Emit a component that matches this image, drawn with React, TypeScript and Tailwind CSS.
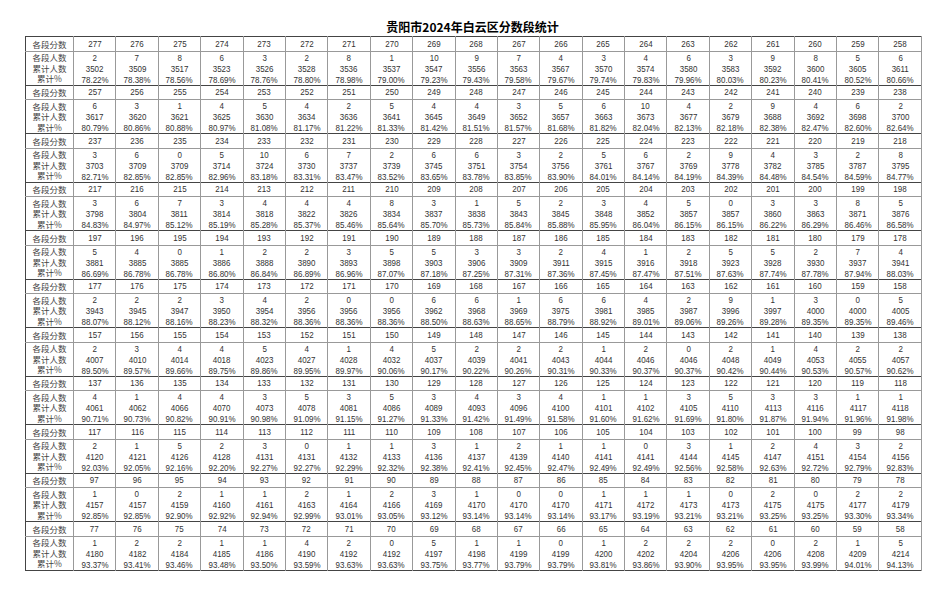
import React from 'react'

// 每段人数, 从 277 分开始, 每块 20 个分数段
const counts: number[][] = [
  [2, 7, 8, 6, 3, 2, 8, 1, 10, 9, 7, 4, 3, 4, 6, 3, 9, 8, 5, 6],
  [6, 3, 1, 4, 5, 4, 2, 5, 4, 4, 3, 5, 6, 10, 4, 2, 9, 4, 6, 2],
  [3, 6, 0, 5, 10, 6, 7, 2, 6, 6, 3, 2, 5, 6, 2, 9, 4, 3, 2, 8],
  [3, 6, 7, 3, 4, 4, 4, 8, 3, 1, 5, 2, 3, 4, 5, 0, 3, 3, 8, 5],
  [5, 4, 0, 1, 2, 2, 3, 5, 5, 3, 3, 2, 4, 1, 2, 5, 5, 2, 7, 4],
  [2, 2, 2, 3, 4, 2, 0, 0, 6, 6, 1, 6, 6, 4, 2, 9, 1, 3, 0, 5],
  [2, 3, 4, 4, 5, 4, 1, 4, 5, 2, 2, 2, 1, 2, 0, 2, 1, 4, 2, 2],
  [4, 1, 4, 4, 3, 5, 3, 5, 3, 4, 3, 4, 1, 1, 3, 5, 3, 3, 1, 1],
  [2, 1, 5, 2, 3, 0, 1, 1, 3, 1, 2, 1, 1, 0, 3, 1, 2, 4, 3, 2],
  [1, 0, 2, 1, 1, 2, 1, 2, 3, 1, 0, 0, 1, 1, 1, 0, 2, 0, 2, 2],
  [1, 2, 2, 1, 1, 4, 2, 0, 5, 1, 1, 0, 1, 2, 2, 2, 0, 2, 1, 5],
]

const START = 3500
const TOTAL = 4477

type Cell = { score: number; n: number; cum: number; pct: string }

function buildBlocks(): Cell[][] {
  let cum = START
  return counts.map((row, b) =>
    row.map((n, i) => {
      cum += n
      return {
        score: 277 - b * 20 - i,
        n,
        cum,
        pct: ((cum / TOTAL) * 100).toFixed(2) + '%',
      }
    }),
  )
}

const cjk = { fontFamily: '"Noto Sans CJK SC", "Liberation Sans", sans-serif' }
const num = { fontFamily: '"Liberation Sans", Arial, sans-serif' }

function Num({ children }: { children: React.ReactNode }) {
  return <span className="inline-block scale-x-[0.84] whitespace-nowrap">{children}</span>
}

export default function App() {
  const blocks = buildBlocks()

  return (
    <div className="min-h-screen w-[945px] bg-white text-[#333]">
      <div
        className="flex h-[36px] items-end justify-center pb-[1px] text-[12px] font-bold leading-[16px] text-black"
        style={cjk}
      >
        贵阳市2024年白云区分数段统计
      </div>

      <table className="ml-[25px] w-[897px] table-fixed border-collapse border border-[#444]">
        <colgroup>
          <col className="w-[48px]" />
        </colgroup>
        <tbody>
          {blocks.map((block, b) => (
            <React.Fragment key={b}>
              <tr className="h-[14.5px] border-t-[1.5px] border-[#444]">
                <td
                  className="border-r border-b border-[#999] p-0 text-center text-[8.5px] leading-[10px] text-[#444]"
                  style={cjk}
                >
                  各段分数
                </td>
                {block.map((c) => (
                  <td
                    key={c.score}
                    className="border-r border-b border-[#999] p-0 text-center text-[9.5px] leading-[10px]"
                    style={num}
                  >
                    <Num>{c.score}</Num>
                  </td>
                ))}
              </tr>
              <tr className="h-[34px]">
                <td
                  className="border-r border-[#999] p-0 text-center text-[8.5px] leading-[10.5px] text-[#444]"
                  style={cjk}
                >
                  <div>各段人数</div>
                  <div>累计人数</div>
                  <div>累计%</div>
                </td>
                {block.map((c) => (
                  <td
                    key={c.score}
                    className="border-r border-[#999] p-0 text-center text-[9.5px] leading-[11px]"
                    style={num}
                  >
                    <div>
                      <Num>{c.n}</Num>
                    </div>
                    <div>
                      <Num>{c.cum}</Num>
                    </div>
                    <div>
                      <Num>{c.pct}</Num>
                    </div>
                  </td>
                ))}
              </tr>
            </React.Fragment>
          ))}
        </tbody>
      </table>
    </div>
  )
}
